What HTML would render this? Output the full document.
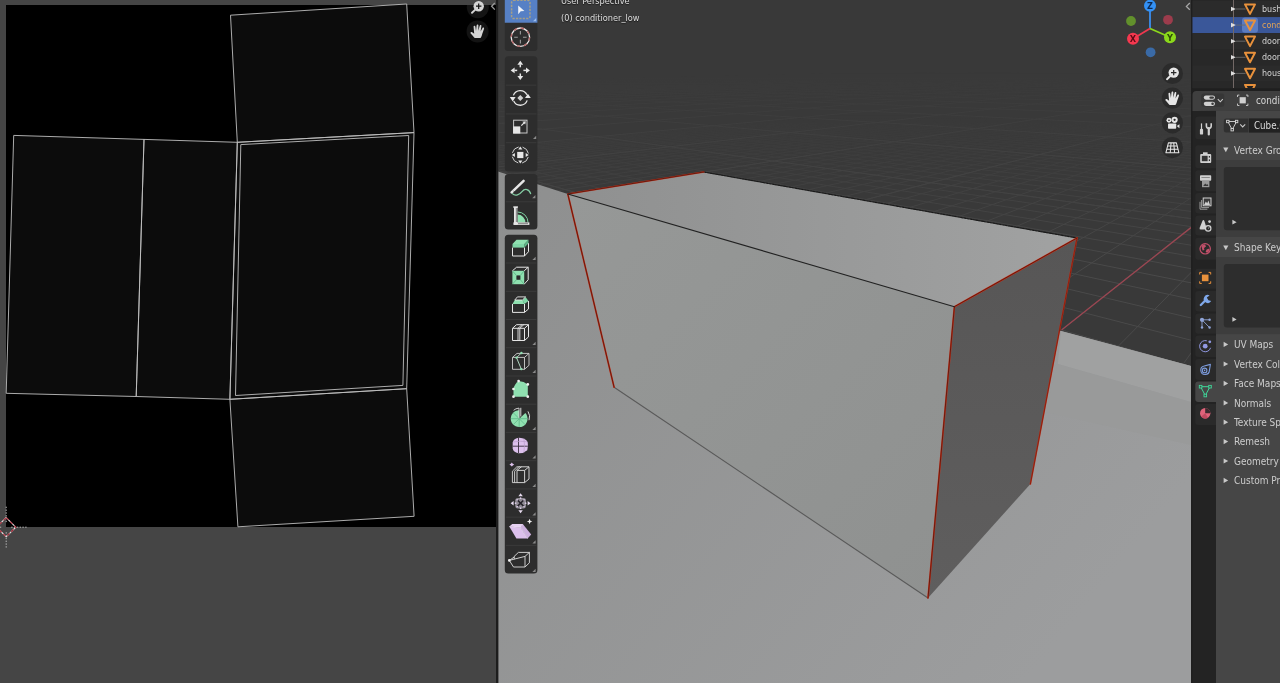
<!DOCTYPE html>
<html><head><meta charset="utf-8"><title>Blender</title>
<style>
html,body{margin:0;padding:0;background:#454545;}
body{width:1280px;height:683px;overflow:hidden;position:relative;font-family:"DejaVu Sans Condensed","DejaVu Sans","Liberation Sans",sans-serif;}
.t{position:absolute;white-space:nowrap;line-height:15px;height:15px;font-size:10px;will-change:transform;}
svg text{font-family:"DejaVu Sans","Liberation Sans",sans-serif;}
</style></head><body>
<svg width="1280" height="683" viewBox="0 0 1280 683" style="position:absolute;left:0;top:0;will-change:transform">
<rect x="0" y="0" width="496" height="683" fill="#454545"/>
<rect x="6" y="5" width="490" height="522" fill="#000"/>
<polygon points="230.5,15.2 406.7,4.0 414.0,132.6 237.3,142.3" fill="#0c0c0c" stroke="none"/>
<polygon points="13.7,135.4 144.0,139.4 136.2,396.5 6.2,393.3" fill="#0c0c0c" stroke="none"/>
<polygon points="144.0,139.4 237.3,142.3 229.9,399.3 136.2,396.5" fill="#0c0c0c" stroke="none"/>
<polygon points="237.3,142.3 414.0,132.6 406.7,388.7 229.9,399.3" fill="#0c0c0c" stroke="none"/>
<polygon points="229.9,399.3 406.7,388.7 414.1,516.3 237.9,526.8" fill="#0c0c0c" stroke="none"/>
<g fill="none" stroke="#bebebe" stroke-width="0.9" stroke-linejoin="round">
<polygon points="230.5,15.2 406.7,4.0 414.0,132.6 237.3,142.3"/>
<polygon points="13.7,135.4 144.0,139.4 136.2,396.5 6.2,393.3"/>
<polygon points="144.0,139.4 237.3,142.3 229.9,399.3 136.2,396.5"/>
<polygon points="237.3,142.3 414.0,132.6 406.7,388.7 229.9,399.3"/>
<polygon points="229.9,399.3 406.7,388.7 414.1,516.3 237.9,526.8"/>
<polygon points="240.8,144.6 408.7,135.5 402.9,385.4 235.5,395.5"/>
</g>
<clipPath id="uvclip"><rect x="0" y="0" width="496" height="683"/></clipPath>
<g clip-path="url(#uvclip)">
<clipPath id="uvblk"><rect x="6" y="5" width="490" height="522"/></clipPath><circle cx="477.8" cy="7.2" r="11" fill="#141414" clip-path="url(#uvblk)"/>
<rect x="0" y="0" width="496" height="5" fill="#454545" opacity="0"/>
<circle cx="477.6" cy="31.4" r="11" fill="#131313"/>
<path d="M475.3,9.6 L472.0,12.8" stroke="#d4d4d4" stroke-width="1.9" stroke-linecap="round"/><circle cx="478.7" cy="6.2" r="5.2" fill="#d4d4d4"/><path d="M476.0,6.2 h5.4 M478.7,3.5 v5.4" stroke="#111" stroke-width="1.2"/>
<g transform="translate(477.3 31.5)" fill="#d4d4d4" stroke="none"><path d="M-2.6,6.6 C-3.8,5 -5.4,3.2 -6.6,1.9 C-7.4,0.9 -6.2,-0.1 -5.1,0.7 L-3.1,2.2 L-3.7,-4.6 C-3.8,-5.9 -2.1,-6.1 -1.9,-4.8 L-1.3,-0.6 L-0.7,-6.1 C-0.6,-7.4 1.2,-7.3 1.1,-6 L1,-0.7 L2.4,-5.8 C2.7,-7 4.4,-6.6 4.1,-5.4 L3.3,-0.1 L5.2,-3.4 C5.8,-4.4 7.2,-3.7 6.7,-2.6 L5,2.2 C4.6,4.2 4,5.4 3.2,6.6 Z"/></g>
<path d="M494.8,3 L491.6,6.3 L494.8,9.6" fill="none" stroke="#9a9a9a" stroke-width="1.3"/>
</g>
<g fill="none" stroke-width="1">
<path d="M6.2,506.70000000000005 V522.2 M6.2,532.2 V547.7 M11.2,527.2 H26.7 M1.2000000000000002,527.2 H-1.7999999999999998" stroke="#b8b8b8" stroke-dasharray="1.4 1.4"/>
<path d="M6.2,517.6 L15.8,527.2 L6.2,536.8000000000001 L-3.3999999999999995,527.2 Z" stroke="#e4e4e4" stroke-width="1.1"/>
<path d="M6.2,517.6 L15.8,527.2 L6.2,536.8000000000001 L-3.3999999999999995,527.2 Z" stroke="#a82434" stroke-width="1.1" stroke-dasharray="3.2 2.4"/>
</g>
<defs><linearGradient id="bgv" x1="0" y1="0" x2="0" y2="1"><stop offset="0" stop-color="#393939"/><stop offset="1" stop-color="#3c3c3c"/></linearGradient>
<linearGradient id="front" x1="0" y1="0" x2="1" y2="1"><stop offset="0" stop-color="#969897"/><stop offset="1" stop-color="#8f9190"/></linearGradient>
<linearGradient id="side" x1="0" y1="0" x2="0" y2="1"><stop offset="0" stop-color="#575656"/><stop offset="1" stop-color="#5f5e5e"/></linearGradient>
<linearGradient id="topf" x1="0" y1="0" x2="1" y2="0"><stop offset="0" stop-color="#8f9090"/><stop offset="1" stop-color="#a1a2a2"/></linearGradient>
<linearGradient id="floor" x1="0" y1="0" x2="1" y2="0.6"><stop offset="0" stop-color="#8e8f8f"/><stop offset="1" stop-color="#9c9d9e"/></linearGradient>
<clipPath id="vpclip"><rect x="498.5" y="0" width="692.5" height="683"/></clipPath>
<clipPath id="darkclip"><polygon points="498,0 1191,0 1191,366 1061,331 1077,238 703.7,172 567.8,194 498,171.4"/></clipPath>
</defs>
<rect x="496" y="0" width="2.5" height="683" fill="#1d1d1d"/>
<g clip-path="url(#vpclip)">
<rect x="498" y="0" width="693" height="683" fill="#393939"/>
<defs><linearGradient id="gfade" gradientUnits="userSpaceOnUse" x1="0" y1="115" x2="0" y2="270"><stop offset="0" stop-color="#fff" stop-opacity="0"/><stop offset="1" stop-color="#fff" stop-opacity="1"/></linearGradient>
<mask id="gmask" maskUnits="userSpaceOnUse" x="499" y="0" width="692" height="400"><rect x="499" y="0" width="692" height="400" fill="url(#gfade)"/></mask>
<linearGradient id="cfade" gradientUnits="userSpaceOnUse" x1="0" y1="70" x2="0" y2="170"><stop offset="0" stop-color="#fff" stop-opacity="0"/><stop offset="1" stop-color="#fff" stop-opacity="1"/></linearGradient>
<mask id="cmask" maskUnits="userSpaceOnUse" x="499" y="0" width="692" height="400"><rect x="499" y="0" width="692" height="400" fill="url(#cfade)"/></mask></defs>
<g clip-path="url(#darkclip)">
<g mask="url(#gmask)" stroke="#4a4a4a" stroke-width="1" fill="none">
<line x1="-8152.0" y1="1514.7" x2="-1089.1" y2="295.5"/>
<line x1="-7726.1" y1="1508.8" x2="-965.0" y2="283.8"/>
<line x1="-7300.3" y1="1502.9" x2="-852.7" y2="273.2"/>
<line x1="-6874.4" y1="1497.0" x2="-750.6" y2="263.6"/>
<line x1="-6448.6" y1="1491.2" x2="-657.4" y2="254.8"/>
<line x1="-6022.7" y1="1485.3" x2="-571.9" y2="246.8"/>
<line x1="-5596.9" y1="1479.4" x2="-493.2" y2="239.4"/>
<line x1="-5171.0" y1="1473.5" x2="-420.6" y2="232.5"/>
<line x1="-4745.2" y1="1467.6" x2="-353.3" y2="226.2"/>
<line x1="-4319.3" y1="1461.7" x2="-290.8" y2="220.3"/>
<line x1="-3893.5" y1="1455.8" x2="-232.6" y2="214.8"/>
<line x1="-3467.6" y1="1449.9" x2="-178.3" y2="209.7"/>
<line x1="-3041.8" y1="1444.0" x2="-127.5" y2="204.9"/>
<line x1="-2615.9" y1="1438.1" x2="-79.9" y2="200.4"/>
<line x1="-2190.1" y1="1432.2" x2="-35.1" y2="196.2"/>
<line x1="-1764.2" y1="1426.4" x2="7.0" y2="192.2"/>
<line x1="-1338.4" y1="1420.5" x2="46.8" y2="188.5"/>
<line x1="-912.5" y1="1414.6" x2="84.3" y2="185.0"/>
<line x1="-486.7" y1="1408.7" x2="119.8" y2="181.6"/>
<line x1="-60.8" y1="1402.8" x2="153.4" y2="178.5"/>
<line x1="365.0" y1="1396.9" x2="185.3" y2="175.4"/>
<line x1="790.9" y1="1391.0" x2="215.7" y2="172.6"/>
<line x1="1216.7" y1="1385.1" x2="244.5" y2="169.9"/>
<line x1="1642.6" y1="1379.2" x2="272.0" y2="167.3"/>
<line x1="2068.4" y1="1373.3" x2="298.2" y2="164.8"/>
<line x1="2494.3" y1="1367.5" x2="323.2" y2="162.5"/>
<line x1="2920.1" y1="1361.6" x2="347.1" y2="160.2"/>
<line x1="3346.0" y1="1355.7" x2="369.9" y2="158.1"/>
<line x1="3771.8" y1="1349.8" x2="391.8" y2="156.0"/>
<line x1="4197.7" y1="1343.9" x2="412.8" y2="154.0"/>
<line x1="4623.5" y1="1338.0" x2="432.9" y2="152.1"/>
<line x1="5049.3" y1="1332.1" x2="452.2" y2="150.3"/>
<line x1="5475.2" y1="1326.2" x2="470.8" y2="148.5"/>
<line x1="5901.0" y1="1320.3" x2="488.6" y2="146.9"/>
<line x1="6326.9" y1="1314.4" x2="505.8" y2="145.2"/>
<line x1="6752.7" y1="1308.5" x2="522.4" y2="143.7"/>
<line x1="7178.6" y1="1302.7" x2="538.3" y2="142.2"/>
<line x1="7604.4" y1="1296.8" x2="553.7" y2="140.7"/>
<line x1="8030.3" y1="1290.9" x2="568.5" y2="139.3"/>
<line x1="8456.1" y1="1285.0" x2="582.8" y2="138.0"/>
<line x1="8882.0" y1="1279.1" x2="596.7" y2="136.7"/>
<line x1="9307.8" y1="1273.2" x2="610.0" y2="135.4"/>
<line x1="9733.7" y1="1267.3" x2="623.0" y2="134.2"/>
<line x1="10159.5" y1="1261.4" x2="635.5" y2="133.0"/>
<line x1="10585.4" y1="1255.5" x2="647.6" y2="131.9"/>
<line x1="11011.2" y1="1249.6" x2="659.4" y2="130.8"/>
<line x1="11437.1" y1="1243.8" x2="670.7" y2="129.7"/>
<line x1="11862.9" y1="1237.9" x2="681.8" y2="128.7"/>
<line x1="12288.8" y1="1232.0" x2="692.5" y2="127.7"/>
<line x1="12714.6" y1="1226.1" x2="702.9" y2="126.7"/>
<line x1="13140.5" y1="1220.2" x2="713.0" y2="125.7"/>
<line x1="13566.3" y1="1214.3" x2="722.8" y2="124.8"/>
<line x1="13992.2" y1="1208.4" x2="732.3" y2="123.9"/>
<line x1="14418.0" y1="1202.5" x2="741.6" y2="123.0"/>
<line x1="14843.9" y1="1196.6" x2="750.6" y2="122.2"/>
<line x1="15269.7" y1="1190.7" x2="759.4" y2="121.4"/>
<line x1="15695.6" y1="1184.8" x2="767.9" y2="120.6"/>
<line x1="16121.4" y1="1179.0" x2="776.2" y2="119.8"/>
<line x1="16547.3" y1="1173.1" x2="784.3" y2="119.0"/>
<line x1="16973.1" y1="1167.2" x2="792.2" y2="118.3"/>
<line x1="17399.0" y1="1161.3" x2="799.9" y2="117.5"/>
<line x1="17824.8" y1="1155.4" x2="807.4" y2="116.8"/>
<line x1="18250.7" y1="1149.5" x2="814.7" y2="116.1"/>
<line x1="18676.5" y1="1143.6" x2="821.8" y2="115.5"/>
<line x1="19102.3" y1="1137.7" x2="828.8" y2="114.8"/>
<line x1="19528.2" y1="1131.8" x2="835.6" y2="114.2"/>
<line x1="19954.0" y1="1125.9" x2="842.2" y2="113.6"/>
<line x1="20379.9" y1="1120.1" x2="848.7" y2="112.9"/>
<line x1="20805.7" y1="1114.2" x2="855.0" y2="112.3"/>
<line x1="21231.6" y1="1108.3" x2="861.2" y2="111.8"/>
<line x1="4131.9" y1="1344.8" x2="1579.0" y2="145.1"/>
<line x1="3763.2" y1="1349.9" x2="1551.9" y2="143.8"/>
<line x1="3394.5" y1="1355.0" x2="1525.8" y2="142.6"/>
<line x1="3025.8" y1="1360.1" x2="1500.6" y2="141.4"/>
<line x1="2657.1" y1="1365.2" x2="1476.4" y2="140.2"/>
<line x1="2288.4" y1="1370.3" x2="1453.0" y2="139.1"/>
<line x1="1919.7" y1="1375.4" x2="1430.5" y2="138.0"/>
<line x1="1551.0" y1="1380.5" x2="1408.7" y2="137.0"/>
<line x1="1182.3" y1="1385.6" x2="1387.7" y2="136.0"/>
<line x1="813.6" y1="1390.7" x2="1367.3" y2="135.0"/>
<line x1="444.9" y1="1395.8" x2="1347.7" y2="134.1"/>
<line x1="76.2" y1="1400.9" x2="1328.7" y2="133.2"/>
<line x1="-292.5" y1="1406.0" x2="1310.3" y2="132.3"/>
<line x1="-661.2" y1="1411.1" x2="1292.4" y2="131.5"/>
<line x1="-1029.9" y1="1416.2" x2="1275.1" y2="130.6"/>
<line x1="-1398.6" y1="1421.3" x2="1258.4" y2="129.8"/>
<line x1="-1767.3" y1="1426.4" x2="1242.1" y2="129.1"/>
<line x1="-2136.0" y1="1431.5" x2="1226.3" y2="128.3"/>
<line x1="-2504.7" y1="1436.6" x2="1211.0" y2="127.6"/>
<line x1="-2873.4" y1="1441.7" x2="1196.1" y2="126.9"/>
<line x1="-3242.1" y1="1446.8" x2="1181.7" y2="126.2"/>
<line x1="-3610.8" y1="1451.9" x2="1167.6" y2="125.5"/>
<line x1="-3979.5" y1="1457.0" x2="1153.9" y2="124.9"/>
<line x1="-4348.2" y1="1462.1" x2="1140.6" y2="124.2"/>
<line x1="-4716.9" y1="1467.2" x2="1127.7" y2="123.6"/>
<line x1="-5085.6" y1="1472.3" x2="1115.0" y2="123.0"/>
<line x1="-5454.3" y1="1477.4" x2="1102.8" y2="122.4"/>
<line x1="-5823.0" y1="1482.5" x2="1090.8" y2="121.9"/>
<line x1="-6191.7" y1="1487.6" x2="1079.1" y2="121.3"/>
<line x1="-6560.4" y1="1492.7" x2="1067.8" y2="120.8"/>
<line x1="-6929.1" y1="1497.8" x2="1056.7" y2="120.2"/>
<line x1="-7297.8" y1="1502.9" x2="1045.9" y2="119.7"/>
<line x1="-7666.5" y1="1508.0" x2="1035.3" y2="119.2"/>
<line x1="-8035.2" y1="1513.1" x2="1025.0" y2="118.7"/>
<line x1="-8403.9" y1="1518.2" x2="1014.9" y2="118.2"/>
<line x1="-8772.6" y1="1523.3" x2="1005.1" y2="117.8"/>
<line x1="-9141.3" y1="1528.4" x2="995.5" y2="117.3"/>
<line x1="-9510.0" y1="1533.5" x2="986.1" y2="116.9"/>
<line x1="-9878.7" y1="1538.6" x2="976.9" y2="116.4"/>
<line x1="-10247.4" y1="1543.7" x2="968.0" y2="116.0"/>
<line x1="-10616.1" y1="1548.8" x2="959.2" y2="115.6"/>
<line x1="-10984.8" y1="1553.9" x2="950.6" y2="115.2"/>
<line x1="-11353.5" y1="1559.0" x2="942.2" y2="114.8"/>
<line x1="-11722.2" y1="1564.1" x2="934.0" y2="114.4"/>
<line x1="-12090.9" y1="1569.2" x2="926.0" y2="114.0"/>
<line x1="-12459.6" y1="1574.3" x2="918.1" y2="113.6"/>
<line x1="-12828.3" y1="1579.4" x2="910.4" y2="113.3"/>
<line x1="-13197.0" y1="1584.5" x2="902.8" y2="112.9"/>
<line x1="-13565.7" y1="1589.6" x2="895.4" y2="112.5"/>
<line x1="-13934.4" y1="1594.7" x2="888.2" y2="112.2"/>
<line x1="-14303.1" y1="1599.8" x2="881.1" y2="111.9"/>
<line x1="-14671.8" y1="1604.9" x2="874.1" y2="111.5"/>
</g>
<g mask="url(#cmask)" stroke="#434343" stroke-width="1" fill="none">
<line x1="-123131.1" y1="3105.2" x2="-5686.6" y2="221.8"/>
<line x1="-118872.6" y1="3046.2" x2="-4684.9" y2="199.1"/>
<line x1="-114614.1" y1="2987.3" x2="-3931.4" y2="182.0"/>
<line x1="-110355.6" y1="2928.4" x2="-3343.9" y2="168.6"/>
<line x1="-106097.1" y1="2869.5" x2="-2873.1" y2="158.0"/>
<line x1="-101838.6" y1="2810.6" x2="-2487.2" y2="149.2"/>
<line x1="-97580.1" y1="2751.7" x2="-2165.3" y2="141.9"/>
<line x1="-93321.7" y1="2692.8" x2="-1892.6" y2="135.7"/>
<line x1="-89063.2" y1="2633.9" x2="-1658.7" y2="130.4"/>
<line x1="-84804.7" y1="2575.0" x2="-1455.8" y2="125.8"/>
<line x1="-80546.2" y1="2516.1" x2="-1278.1" y2="121.8"/>
<line x1="-76287.7" y1="2457.2" x2="-1121.3" y2="118.2"/>
<line x1="-72029.2" y1="2398.3" x2="-981.8" y2="115.0"/>
<line x1="-67770.7" y1="2339.4" x2="-856.9" y2="112.2"/>
<line x1="-63512.3" y1="2280.5" x2="-744.5" y2="109.7"/>
<line x1="-59253.8" y1="2221.6" x2="-642.8" y2="107.4"/>
<line x1="-54995.3" y1="2162.7" x2="-550.2" y2="105.3"/>
<line x1="-50736.8" y1="2103.8" x2="-465.7" y2="103.3"/>
<line x1="-46478.3" y1="2044.9" x2="-388.2" y2="101.6"/>
<line x1="-42219.8" y1="1986.0" x2="-316.9" y2="100.0"/>
<line x1="-37961.3" y1="1927.0" x2="-251.1" y2="98.5"/>
<line x1="-33702.9" y1="1868.1" x2="-190.1" y2="97.1"/>
<line x1="-29444.4" y1="1809.2" x2="-133.4" y2="95.8"/>
<line x1="-25185.9" y1="1750.3" x2="-80.7" y2="94.6"/>
<line x1="-20927.4" y1="1691.4" x2="-31.5" y2="93.5"/>
<line x1="-16668.9" y1="1632.5" x2="14.6" y2="92.4"/>
<line x1="-12410.4" y1="1573.6" x2="57.8" y2="91.5"/>
<line x1="-8152.0" y1="1514.7" x2="98.4" y2="90.5"/>
<line x1="-3893.5" y1="1455.8" x2="136.6" y2="89.7"/>
<line x1="365.0" y1="1396.9" x2="172.6" y2="88.9"/>
<line x1="4623.5" y1="1338.0" x2="206.6" y2="88.1"/>
<line x1="8882.0" y1="1279.1" x2="238.8" y2="87.3"/>
<line x1="13140.5" y1="1220.2" x2="269.3" y2="86.7"/>
<line x1="17399.0" y1="1161.3" x2="298.2" y2="86.0"/>
<line x1="21657.4" y1="1102.4" x2="325.7" y2="85.4"/>
<line x1="25915.9" y1="1043.5" x2="351.9" y2="84.8"/>
<line x1="30174.4" y1="984.6" x2="376.8" y2="84.2"/>
<line x1="34432.9" y1="925.7" x2="400.6" y2="83.7"/>
<line x1="38691.4" y1="866.8" x2="423.2" y2="83.2"/>
<line x1="42949.9" y1="807.9" x2="444.9" y2="82.7"/>
<line x1="47208.4" y1="749.0" x2="465.6" y2="82.2"/>
<line x1="51466.8" y1="690.0" x2="485.5" y2="81.8"/>
<line x1="55725.3" y1="631.1" x2="504.5" y2="81.3"/>
<line x1="59983.8" y1="572.2" x2="522.7" y2="80.9"/>
<line x1="64242.3" y1="513.3" x2="540.3" y2="80.5"/>
<line x1="68500.8" y1="454.4" x2="557.1" y2="80.1"/>
<line x1="72759.3" y1="395.5" x2="573.3" y2="79.8"/>
<line x1="77017.7" y1="336.6" x2="588.9" y2="79.4"/>
<line x1="81276.2" y1="277.7" x2="603.9" y2="79.1"/>
<line x1="85534.7" y1="218.8" x2="618.3" y2="78.7"/>
<line x1="89793.2" y1="159.9" x2="632.3" y2="78.4"/>
<line x1="94051.7" y1="101.0" x2="645.7" y2="78.1"/>
<line x1="98310.2" y1="42.1" x2="658.7" y2="77.8"/>
<line x1="102568.7" y1="-16.8" x2="671.2" y2="77.5"/>
<line x1="106827.1" y1="-75.7" x2="683.4" y2="77.3"/>
<line x1="111085.6" y1="-134.6" x2="695.1" y2="77.0"/>
<line x1="115344.1" y1="-193.5" x2="706.5" y2="76.7"/>
<line x1="119602.6" y1="-252.4" x2="717.5" y2="76.5"/>
<line x1="123861.1" y1="-311.3" x2="728.1" y2="76.2"/>
<line x1="128119.6" y1="-370.2" x2="738.4" y2="76.0"/>
<line x1="132378.1" y1="-429.2" x2="748.4" y2="75.8"/>
<line x1="136636.5" y1="-488.1" x2="758.2" y2="75.6"/>
<line x1="140895.0" y1="-547.0" x2="767.6" y2="75.4"/>
<line x1="145153.5" y1="-605.9" x2="776.7" y2="75.1"/>
<line x1="149412.0" y1="-664.8" x2="785.6" y2="74.9"/>
<line x1="153670.5" y1="-723.7" x2="794.3" y2="74.7"/>
<line x1="157929.0" y1="-782.6" x2="802.7" y2="74.6"/>
<line x1="162187.4" y1="-841.5" x2="810.9" y2="74.4"/>
<line x1="166445.9" y1="-900.4" x2="818.8" y2="74.2"/>
<line x1="170704.4" y1="-959.3" x2="826.6" y2="74.0"/>
<line x1="3394.5" y1="1355.0" x2="1414.2" y2="70.2"/>
<line x1="-292.5" y1="1406.0" x2="1388.2" y2="70.4"/>
<line x1="-3979.5" y1="1457.0" x2="1363.3" y2="70.5"/>
<line x1="-7666.5" y1="1508.0" x2="1339.4" y2="70.7"/>
<line x1="-11353.5" y1="1559.0" x2="1316.4" y2="70.8"/>
<line x1="-15040.5" y1="1610.0" x2="1294.3" y2="71.0"/>
<line x1="-18727.5" y1="1661.0" x2="1273.1" y2="71.1"/>
<line x1="-22414.5" y1="1712.0" x2="1252.6" y2="71.2"/>
<line x1="-26101.5" y1="1763.0" x2="1232.9" y2="71.3"/>
<line x1="-29788.5" y1="1814.0" x2="1213.9" y2="71.5"/>
<line x1="-33475.5" y1="1865.0" x2="1195.6" y2="71.6"/>
<line x1="-37162.5" y1="1916.0" x2="1177.9" y2="71.7"/>
<line x1="-40849.5" y1="1967.0" x2="1160.8" y2="71.8"/>
<line x1="-44536.5" y1="2018.0" x2="1144.2" y2="71.9"/>
<line x1="-48223.5" y1="2069.0" x2="1128.2" y2="72.0"/>
<line x1="-51910.5" y1="2120.0" x2="1112.8" y2="72.1"/>
<line x1="-55597.5" y1="2171.0" x2="1097.8" y2="72.2"/>
<line x1="-59284.5" y1="2222.0" x2="1083.3" y2="72.3"/>
<line x1="-62971.5" y1="2273.0" x2="1069.2" y2="72.4"/>
<line x1="-66658.5" y1="2324.0" x2="1055.6" y2="72.5"/>
<line x1="-70345.5" y1="2375.0" x2="1042.3" y2="72.5"/>
<line x1="-74032.5" y1="2426.0" x2="1029.5" y2="72.6"/>
<line x1="-77719.5" y1="2477.0" x2="1017.0" y2="72.7"/>
<line x1="-81406.5" y1="2528.0" x2="1004.9" y2="72.8"/>
<line x1="-85093.5" y1="2579.0" x2="993.2" y2="72.8"/>
<line x1="-88780.5" y1="2630.0" x2="981.7" y2="72.9"/>
<line x1="-92467.5" y1="2681.0" x2="970.6" y2="73.0"/>
<line x1="-96154.5" y1="2732.0" x2="959.8" y2="73.1"/>
<line x1="-99841.5" y1="2783.0" x2="949.2" y2="73.1"/>
<line x1="-103528.5" y1="2834.0" x2="939.0" y2="73.2"/>
<line x1="-107215.5" y1="2885.0" x2="929.0" y2="73.2"/>
<line x1="-110902.5" y1="2936.0" x2="919.3" y2="73.3"/>
<line x1="-114589.5" y1="2987.0" x2="909.8" y2="73.4"/>
<line x1="-118276.5" y1="3038.0" x2="900.5" y2="73.4"/>
<line x1="-121963.5" y1="3089.0" x2="891.5" y2="73.5"/>
<line x1="-125650.5" y1="3140.0" x2="882.7" y2="73.5"/>
<line x1="-129337.5" y1="3191.0" x2="874.1" y2="73.6"/>
<line x1="-133024.5" y1="3242.0" x2="865.7" y2="73.6"/>
<line x1="-136711.5" y1="3293.0" x2="857.5" y2="73.7"/>
<line x1="-140398.5" y1="3344.0" x2="849.5" y2="73.7"/>
<line x1="-144085.5" y1="3395.0" x2="841.7" y2="73.8"/>
</g>
<line x1="1061.5" y1="330" x2="1191" y2="227.6" stroke="#9c4652" stroke-width="1.3"/>
</g>
<polygon points="498,171.4 567.8,194 960,300 1061,331 1191,366 1191,683 498,683" fill="url(#floor)"/>
<polygon points="1061,331 1191,366 1191,402 1057.8,364" fill="#a0a1a1"/>
<polygon points="1057.8,364 1191,402 1191,445 1045,412" fill="#999a9a"/>
<polygon points="567.8,194.0 703.7,172.0 1077.0,238.0 954.4,306.7" fill="url(#topf)"/>
<polygon points="567.8,194.0 954.4,306.7 928.0,598.0 614.1,387.2" fill="url(#front)"/>
<polygon points="954.4,306.7 1077.0,238.0 1030.4,484.0 928.0,598.0" fill="url(#side)"/>
<g fill="none" stroke-linecap="round">
<polyline points="703.7,172.0 1077.0,238.0" stroke="#1a1a1a" stroke-width="1.2" stroke-dasharray="2 1"/>
<polyline points="614.1,387.2 928.0,598.0" stroke="#5a5a5a" stroke-width="1.1"/>
<polyline points="614.1,387.2 567.8,194.0 703.7,172.0" stroke="#cc3018" stroke-width="1.7" stroke-linejoin="round"/>
<polyline points="1077.0,238.0 954.4,306.7 928.0,598.0" stroke="#cc3018" stroke-width="1.7" stroke-linejoin="round"/>
<polyline points="1077.0,238.0 1030.4,484.0" stroke="#cc3018" stroke-width="1.5"/>
<polyline points="614.1,387.2 567.8,194.0 703.7,172.0" stroke="#2a0e0a" stroke-width="0.75" stroke-opacity="0.85" stroke-linejoin="round"/>
<polyline points="1077.0,238.0 954.4,306.7 928.0,598.0" stroke="#2a0e0a" stroke-width="0.75" stroke-opacity="0.85" stroke-linejoin="round"/>
<polyline points="1077.0,238.0 1030.4,484.0" stroke="#2a0e0a" stroke-width="0.6" stroke-opacity="0.7"/>
<polyline points="567.8,194.0 954.4,306.7" stroke="#222" stroke-width="1.1"/>
</g>
</g>
<rect x="504.8" y="-6" width="32.6" height="28.7" fill="#5680c5"/>
<path d="M504.8,22.9 h32.6 v25 a3,3 0 0 1 -3,3 h-26.6 a3,3 0 0 1 -3,-3 z" fill="#2d2d2d"/>
<rect x="504.8" y="56.3" width="32.6" height="115.2" rx="3.5" fill="#2d2d2d"/>
<line x1="505.8" y1="85.1" x2="536.4" y2="85.1" stroke="#3b3b3b" stroke-width="1"/>
<line x1="505.8" y1="113.9" x2="536.4" y2="113.9" stroke="#3b3b3b" stroke-width="1"/>
<line x1="505.8" y1="142.7" x2="536.4" y2="142.7" stroke="#3b3b3b" stroke-width="1"/>
<rect x="504.8" y="174" width="32.6" height="55.5" rx="3.5" fill="#2d2d2d"/>
<line x1="505.8" y1="201.8" x2="536.4" y2="201.8" stroke="#3b3b3b" stroke-width="1"/>
<rect x="504.8" y="234.8" width="32.6" height="338.8" rx="3.5" fill="#2d2d2d"/>
<line x1="505.8" y1="263.0" x2="536.4" y2="263.0" stroke="#3b3b3b" stroke-width="1"/>
<line x1="505.8" y1="291.3" x2="536.4" y2="291.3" stroke="#3b3b3b" stroke-width="1"/>
<line x1="505.8" y1="319.5" x2="536.4" y2="319.5" stroke="#3b3b3b" stroke-width="1"/>
<line x1="505.8" y1="347.7" x2="536.4" y2="347.7" stroke="#3b3b3b" stroke-width="1"/>
<line x1="505.8" y1="376.0" x2="536.4" y2="376.0" stroke="#3b3b3b" stroke-width="1"/>
<line x1="505.8" y1="404.2" x2="536.4" y2="404.2" stroke="#3b3b3b" stroke-width="1"/>
<line x1="505.8" y1="432.4" x2="536.4" y2="432.4" stroke="#3b3b3b" stroke-width="1"/>
<line x1="505.8" y1="460.7" x2="536.4" y2="460.7" stroke="#3b3b3b" stroke-width="1"/>
<line x1="505.8" y1="488.9" x2="536.4" y2="488.9" stroke="#3b3b3b" stroke-width="1"/>
<line x1="505.8" y1="517.1" x2="536.4" y2="517.1" stroke="#3b3b3b" stroke-width="1"/>
<line x1="505.8" y1="545.4" x2="536.4" y2="545.4" stroke="#3b3b3b" stroke-width="1"/>
<rect x="511.6" y="0.3" width="18.4" height="18.3" rx="2" fill="none" stroke="#c8ac6c" stroke-opacity="0.7" stroke-width="1.5" stroke-dasharray="2.2 1.2"/>
<path d="M518.2,5.6 L524.4,10.9 L520.7,11.3 L518.2,14.3 Z" fill="#eef2f8"/>
<path d="M536.2,21.2 l0,-3.2 l-3.2,3.2 z" fill="#9fc0f0"/>
<circle cx="520.4" cy="37.2" r="9.2" fill="none" stroke="#ececec" stroke-width="1.3"/>
<circle cx="520.4" cy="37.2" r="9.2" fill="none" stroke="#b86868" stroke-width="1.3" stroke-dasharray="3.6 3.62" />
<path d="M520.4,31.000000000000004 v3.6 M520.4,39.800000000000004 v3.6 M514.1999999999999,37.2 h3.6 M523.0,37.2 h3.6" stroke="#9a9a9a" stroke-width="1.1" fill="none"/>
<g transform="rotate(0 520.3 70.4)"><path d="M520.3,60.800000000000004 l2.9,3.9 h-5.8 z" fill="#e6e6e6"/><path d="M520.3,64.5 v2.8" stroke="#e6e6e6" stroke-width="1.5"/></g>
<g transform="rotate(90 520.3 70.4)"><path d="M520.3,60.800000000000004 l2.9,3.9 h-5.8 z" fill="#e6e6e6"/><path d="M520.3,64.5 v2.8" stroke="#e6e6e6" stroke-width="1.5"/></g>
<g transform="rotate(180 520.3 70.4)"><path d="M520.3,60.800000000000004 l2.9,3.9 h-5.8 z" fill="#e6e6e6"/><path d="M520.3,64.5 v2.8" stroke="#e6e6e6" stroke-width="1.5"/></g>
<g transform="rotate(270 520.3 70.4)"><path d="M520.3,60.800000000000004 l2.9,3.9 h-5.8 z" fill="#e6e6e6"/><path d="M520.3,64.5 v2.8" stroke="#e6e6e6" stroke-width="1.5"/></g>
<path d="M520.3,94.9 l3,3 l-3,3 l-3,-3 z" fill="#d0d0d0"/>
<path d="M513.4,95.4 A7.3,7.3 0 0 1 526.9,94.8" fill="none" stroke="#e6e6e6" stroke-width="1.3"/>
<path d="M527.2,100.4 A7.3,7.3 0 0 1 513.7,101.0" fill="none" stroke="#e6e6e6" stroke-width="1.3"/>
<path d="M527.9,93.7 l2.9,4.4 h-5.8 z" fill="#e6e6e6"/>
<path d="M512.6999999999999,101.5 l2.9,-4.4 h-5.8 z" fill="#e6e6e6"/>
<rect x="513.6" y="120.2" width="13.4" height="12.8" fill="none" stroke="#c8c8c8" stroke-width="1"/>
<rect x="513.1" y="126.4" width="7.2" height="7.1" fill="#e6e6e6"/>
<path d="M521.3,125.6 L524.6,122.3" stroke="#e6e6e6" stroke-width="1.2"/><path d="M525.8,121.2 l-3.4,0.6 l2.8,2.8 z" fill="#e6e6e6"/>
<path d="M536.2,139 l0,-3.2 l-3.2,3.2 z" fill="#8a8a8a"/>
<circle cx="520.3" cy="155" r="8.2" fill="none" stroke="#cfcfcf" stroke-width="1" stroke-dasharray="8.9 4" stroke-dashoffset="-2"/>
<rect x="517.1999999999999" y="151.9" width="6.2" height="6.2" fill="#e6e6e6"/>
<g transform="rotate(0 520.3 155)"><path d="M520.3,146.6 l2.1,3 h-4.2 z" fill="#e6e6e6"/></g>
<g transform="rotate(90 520.3 155)"><path d="M520.3,146.6 l2.1,3 h-4.2 z" fill="#e6e6e6"/></g>
<g transform="rotate(180 520.3 155)"><path d="M520.3,146.6 l2.1,3 h-4.2 z" fill="#e6e6e6"/></g>
<g transform="rotate(270 520.3 155)"><path d="M520.3,146.6 l2.1,3 h-4.2 z" fill="#e6e6e6"/></g>
<path d="M511.6,192.4 L523.6,180.8" stroke="#e6e6e6" stroke-width="2.5" stroke-linecap="round"/>
<path d="M513.4,190.7 l1.2,1.2" stroke="#2d2d2d" stroke-width="0.8"/>
<path d="M512.4,193.6 C515.5,196.8 519.5,194.6 522,191.6 C525,188 529.2,189.2 530.6,193.6" fill="none" stroke="#86cfa6" stroke-width="1.3" stroke-linecap="round"/>
<path d="M535.4,198.2 l0,-3.2 l-3.2,3.2 z" fill="#8a8a8a"/>
<path d="M517.6,222.4 V214.6 A7.8,7.8 0 0 1 525.4,222.4 Z" fill="#8fe0b0"/>
<path d="M517.6,212 A10.4,10.4 0 0 1 528,222.4" fill="none" stroke="#7fd0a2" stroke-width="1"/>
<rect x="514" y="206.8" width="3.4" height="18" fill="#e6e6e6"/>
<rect x="513.4" y="222.4" width="16" height="2.5" fill="#e6e6e6"/>
<rect x="513.2" y="206.4" width="4.8" height="1.3" fill="#e6e6e6"/>
<path d="M515.8,209 h1.6 M515.8,211 h1.6 M515.8,213 h1.6 M515.8,215 h1.6 M515.8,217 h1.6 M515.8,219 h1.6 M515.8,221 h1.6 M519,223 v1.2 M521,223 v1.2 M523,223 v1.2 M525,223 v1.2 M527,223 v1.2" stroke="#3a3a3a" stroke-width="1"/>
<path d="M512.5,244 l4,-4.3 h12 l-4,4.3 z" fill="#8fe0b0"/>
<path d="M512.5,244 h12 v3.6 h-12 z" fill="#7fd6a6"/>
<path d="M524.5,244 l4,-4.3 v3.6 l-4,4.3 z" fill="#5fb588"/>
<path d="M512.5,247.6 V256 H524.5 V247.6 M524.5,256 l4,-4.3 V243.3" fill="none" stroke="#e6e6e6" stroke-width="1" stroke-linejoin="round"/>
<path d="M535.6,260 l0,-3.2 l-3.2,3.2 z" fill="#8a8a8a"/>
<rect x="512.4" y="270.8" width="11.800000000000068" height="13.399999999999977" fill="#8fe0b0"/>
<rect x="516.4" y="275.4" width="4" height="4.4" fill="#2a2a2a"/>
<path d="M512.4,270.8 L516.4,275.4 M524.2,270.8 L520.4,275.4 M512.4,284.2 L516.4,279.8 M524.2,284.2 L520.4,279.8" stroke="#5fb588" stroke-width="0.9"/>
<path d="M512.4,270.8 l4.2,-3.6 h11.6 l-4,3.6 M528.2,267.2 v12.6 l-4,4.4" fill="none" stroke="#e6e6e6" stroke-width="1" stroke-linejoin="round"/>
<path d="M512.5,304 L514.8,300 H522.4 L524.5,304 Z" fill="#8fe0b0"/>
<path d="M522.4,300 L525.6,297 L528.5,301 L524.5,304 Z" fill="#7fd6a6"/>
<path d="M514.8,300 L517.4,296.9 H525.6 L522.4,300 z" fill="#2d2d2d" stroke="#e6e6e6" stroke-width="0.9" stroke-linejoin="round"/>
<path d="M512.5,304 V312.4 H524.5 V304 M524.5,312.4 L528.5,309 V301" fill="none" stroke="#e6e6e6" stroke-width="1" stroke-linejoin="round"/>
<g fill="none" stroke="#e6e6e6" stroke-width="1" stroke-linejoin="round"><rect x="512.5" y="328.3" width="12.0" height="12.199999999999989"/><path d="M512.5,328.3 l4,-3.6 h12.0 l-4,3.6 M528.5,324.7 v12.199999999999989 l-4,3.6"/></g>
<path d="M518,340.5 V328.3 l4,-3.6 M519.8,340.5 V328.3 l4,-3.6" fill="none" stroke="#e6e6e6" stroke-width="0.9"/>
<path d="M535.6,345 l0,-3.2 l-3.2,3.2 z" fill="#8a8a8a"/>
<g fill="none" stroke="#d0d0d0" stroke-width="0.9" stroke-linejoin="round"><rect x="512.5" y="357.4" width="12.0" height="11.900000000000034"/><path d="M512.5,357.4 l4.5,-4 h12.0 l-4.5,4 M529.0,353.4 v11.900000000000034 l-4.5,4"/></g>
<path d="M521.4,353 L516.5,357.6 L521.3,369.1" fill="none" stroke="#bfe8d0" stroke-width="0.9"/>
<circle cx="521.4" cy="353" r="1.2" fill="#8fe0b0"/>
<circle cx="516.5" cy="357.6" r="1.2" fill="#8fe0b0"/>
<circle cx="521.3" cy="369.1" r="1.2" fill="#8fe0b0"/>
<path d="M535.6,373 l0,-3.2 l-3.2,3.2 z" fill="#8a8a8a"/>
<path d="M518.6,381.1 Q524,381.5 527.8,384.4 L527.8,396.7 H513.5 L513.5,389 Q514.5,384 518.6,381.1 Z" fill="#8fe0b0"/>
<circle cx="518.6" cy="381.1" r="1.35" fill="#f0f0f0"/>
<circle cx="527.8" cy="384.4" r="1.35" fill="#f0f0f0"/>
<circle cx="527.8" cy="396.7" r="1.35" fill="#f0f0f0"/>
<circle cx="513.5" cy="396.7" r="1.35" fill="#f0f0f0"/>
<circle cx="513.5" cy="389" r="1.35" fill="#f0f0f0"/>
<path d="M519.2,418.7 L525.4,413.1 A8.4,8.4 0 1 1 519.2,410.3 Z" fill="#8fe0b0"/>
<line x1="519.2" y1="418.7" x2="527.6" y2="418.7" stroke="#5fb588" stroke-width="0.8"/>
<line x1="519.2" y1="418.7" x2="525.1" y2="424.6" stroke="#5fb588" stroke-width="0.8"/>
<line x1="519.2" y1="418.7" x2="519.2" y2="427.1" stroke="#5fb588" stroke-width="0.8"/>
<line x1="519.2" y1="418.7" x2="513.3" y2="424.6" stroke="#5fb588" stroke-width="0.8"/>
<line x1="519.2" y1="418.7" x2="510.8" y2="418.7" stroke="#5fb588" stroke-width="0.8"/>
<line x1="519.2" y1="418.7" x2="513.3" y2="412.8" stroke="#5fb588" stroke-width="0.8"/>
<path d="M520.8,416.5 L520.8,407.8 M528.0,411.4 A9.9,9.9 0 0 1 529.0,420.2" fill="none" stroke="#d8d8d8" stroke-width="1"/>
<path d="M519.0,418.2 V408.09999999999997 Q515.7,408.3 513.6,410.3" fill="none" stroke="#d8d8d8" stroke-width="0.9"/>
<path d="M535.6,430 l0,-3.2 l-3.2,3.2 z" fill="#8a8a8a"/>
<path d="M512.6999999999999,442.6 Q513.3,438.40000000000003 519.3,437.8 Q526.3,438.20000000000005 527.6999999999999,442.6 Q528.5,446.6 527.3,450.20000000000005 Q523.3,453.6 518.3,453.20000000000005 Q513.3,452.20000000000005 512.6999999999999,448.6 Z" fill="#dcc0ec"/>
<path d="M518.5,438.0 V453.0 M512.6999999999999,446.20000000000005 H527.9" stroke="#3a2f40" stroke-width="0.9" fill="none"/>
<path d="M513.0999999999999,442.0 Q520.3,440.6 527.3,441.8 M523.9,438.40000000000003 Q525.0999999999999,445.6 523.9,452.6" stroke="#b99ccc" stroke-width="0.7" fill="none"/>
<path d="M535.6,458.5 l0,-3.2 l-3.2,3.2 z" fill="#8a8a8a"/>
<g fill="none" stroke="#d8d8d8" stroke-width="0.95" stroke-linejoin="round"><rect x="517" y="470.4" width="7.600000000000023" height="12.200000000000045"/><path d="M517,470.4 l4.4,-3.6 h7.600000000000023 l-4.4,3.6 M529.0,466.79999999999995 v12.200000000000045 l-4.4,3.6"/></g>
<path d="M514.6,482.6 V471.2 l4.2,-4.4 h3 M512.4,482.6 V471.2 l4.4,-4.4 h3 M512.4,482.6 H517" fill="none" stroke="#d8d8d8" stroke-width="0.9" stroke-linejoin="round"/>
<path d="M511.8,462.6 l1,1.2 l1.4,0.8 l-1.4,0.8 l-1,1.2 l-1,-1.2 l-1.4,-0.8 l1.4,-0.8 z" fill="#dcc0ec"/>
<path d="M535.6,487 l0,-3.2 l-3.2,3.2 z" fill="#8a8a8a"/>
<rect x="515.2" y="498.0" width="10.8" height="10.4" rx="2.6" fill="#8e8a92"/>
<path d="M517.2,499.8 L524.0,506.59999999999997 M524.0,499.8 L517.2,506.59999999999997" stroke="#26222a" stroke-width="1.5"/>
<g transform="rotate(0 520.6 503.2)"><path d="M520.6,493.2 l2.2,3 h-4.4 z" fill="#e8dcf0"/></g>
<g transform="rotate(90 520.6 503.2)"><path d="M520.6,493.2 l2.2,3 h-4.4 z" fill="#e8dcf0"/></g>
<g transform="rotate(180 520.6 503.2)"><path d="M520.6,493.2 l2.2,3 h-4.4 z" fill="#e8dcf0"/></g>
<g transform="rotate(270 520.6 503.2)"><path d="M520.6,493.2 l2.2,3 h-4.4 z" fill="#e8dcf0"/></g>
<circle cx="517.2" cy="499.8" r="0.9" fill="#d8c8e4"/>
<circle cx="524.0" cy="499.8" r="0.9" fill="#d8c8e4"/>
<circle cx="517.2" cy="506.59999999999997" r="0.9" fill="#d8c8e4"/>
<circle cx="524.0" cy="506.59999999999997" r="0.9" fill="#d8c8e4"/>
<circle cx="520.6" cy="498.2" r="0.9" fill="#d8c8e4"/>
<circle cx="520.6" cy="508.2" r="0.9" fill="#d8c8e4"/>
<circle cx="515.6" cy="503.2" r="0.9" fill="#d8c8e4"/>
<circle cx="525.6" cy="503.2" r="0.9" fill="#d8c8e4"/>
<path d="M535.6,515.5 l0,-3.2 l-3.2,3.2 z" fill="#8a8a8a"/>
<path d="M509.3,526.6 L512.2,524 H522.8 L520.6,527.4 Z" fill="#e6d0f2"/>
<path d="M509.3,526.6 L520.6,527.4 L527.6,538.6 L516.4,538.6 Z" fill="#dcc0ec"/>
<path d="M520.6,527.4 L522.8,524 L531.2,534.6 L527.6,538.6 Z" fill="#cdb0de"/>
<path d="M509.3,526.6 L520.6,527.4 L527.6,538.6 M520.6,527.4 L522.8,524" stroke="#f4e8fa" stroke-width="0.6" fill="none"/>
<path d="M529.6,518.8 l0.8,1.9 l1.9,0.8 l-1.9,0.8 l-0.8,1.9 l-0.8,-1.9 l-1.9,-0.8 l1.9,-0.8 z" fill="#f0f0f0"/>
<path d="M535.6,543.5 l0,-3.2 l-3.2,3.2 z" fill="#8a8a8a"/>
<g fill="none" stroke="#d4d4d4" stroke-width="0.95" stroke-linejoin="round">
<path d="M509.3,560.4 L525,556.4 V567 H513.5 L509.3,560.4 M509.3,560.4 L514.6,556.8 M514,556.6 l4.4,-4.2 H529.4 l-4.4,4 M529.4,552.1999999999999 V562.8 L525,567 M514,556.6 L514.4,559.2"/>
</g>
<circle cx="509.3" cy="560.4" r="1.3" fill="#f0f0f0"/>
<path d="M535.6,572 l0,-3.2 l-3.2,3.2 z" fill="#8a8a8a"/>
<circle cx="1168" cy="19.8" r="4.9" fill="#9c3c4c"/>
<circle cx="1131" cy="21" r="4.9" fill="#62902c"/>
<circle cx="1150.6" cy="52.3" r="4.9" fill="#3a6aa6"/>
<line x1="1150" y1="28.5" x2="1150" y2="6" stroke="#3b8ff0" stroke-width="1.8"/>
<line x1="1150" y1="28.5" x2="1133" y2="38.7" stroke="#f0384f" stroke-width="1.8"/>
<line x1="1150" y1="28.5" x2="1170" y2="37.3" stroke="#8cd81c" stroke-width="1.8"/>
<circle cx="1150" cy="5.7" r="6" fill="#3391f5"/>
<circle cx="1133" cy="38.7" r="6" fill="#f6384f"/>
<circle cx="1170" cy="37.3" r="6" fill="#8bd81b"/>
<text x="1150" y="9" font-size="8.2" font-weight="bold" text-anchor="middle" fill="#0c2a55">Z</text>
<text x="1133" y="42" font-size="8.2" font-weight="bold" text-anchor="middle" fill="#5a0a14">X</text>
<text x="1170" y="40.6" font-size="8.2" font-weight="bold" text-anchor="middle" fill="#2c4a06">Y</text>
<circle cx="1172.4" cy="73.5" r="10.6" fill="#2a2a2a" fill-opacity="0.95"/>
<circle cx="1172.4" cy="98.2" r="10.6" fill="#2a2a2a" fill-opacity="0.95"/>
<circle cx="1172.4" cy="122.8" r="10.6" fill="#2a2a2a" fill-opacity="0.95"/>
<circle cx="1172.4" cy="147.6" r="10.6" fill="#2a2a2a" fill-opacity="0.95"/>
<path d="M1170.3,76.0 L1167.0,79.19999999999999" stroke="#e6e6e6" stroke-width="1.9" stroke-linecap="round"/><circle cx="1173.7" cy="72.6" r="5.2" fill="#e6e6e6"/><path d="M1171.0,72.6 h5.4 M1173.7,69.89999999999999 v5.4" stroke="#2a2a2a" stroke-width="1.2"/>
<g transform="translate(1172.2 98.5)" fill="#e6e6e6" stroke="none"><path d="M-2.6,6.6 C-3.8,5 -5.4,3.2 -6.6,1.9 C-7.4,0.9 -6.2,-0.1 -5.1,0.7 L-3.1,2.2 L-3.7,-4.6 C-3.8,-5.9 -2.1,-6.1 -1.9,-4.8 L-1.3,-0.6 L-0.7,-6.1 C-0.6,-7.4 1.2,-7.3 1.1,-6 L1,-0.7 L2.4,-5.8 C2.7,-7 4.4,-6.6 4.1,-5.4 L3.3,-0.1 L5.2,-3.4 C5.8,-4.4 7.2,-3.7 6.7,-2.6 L5,2.2 C4.6,4.2 4,5.4 3.2,6.6 Z"/></g>
<g transform="translate(1172.4 123.2) scale(0.95) translate(-1172.4 -123.2)"><g transform="translate(1172.4 123.2)" fill="#e6e6e6"><circle cx="-3.6" cy="-3.1" r="2.6"/><circle cx="2.3" cy="-3.6" r="3.3"/><circle cx="-3.6" cy="-3.1" r="0.9" fill="#2a2a2a"/><circle cx="2.3" cy="-3.6" r="1.2" fill="#2a2a2a"/><rect x="-4.6" y="0.2" width="8.6" height="5.6" rx="0.8"/><path d="M4.6,3 L7.4,1 V5.2 Z"/></g></g>
<g transform="translate(1172.4 147.8) scale(0.95) translate(-1172.4 -147.8)"><g transform="translate(1172.4 147.8)" fill="none" stroke="#e6e6e6" stroke-width="1.1" stroke-linejoin="round"><path d="M-4.2,-5.2 H4.2 L6.8,5.2 H-6.8 Z"/><path d="M-5,-1.8 H5 M-5.9,1.6 H5.9 M-1.4,-5.2 L-2.3,5.2 M1.4,-5.2 L2.3,5.2"/></g></g>
<path d="M1189.8,3 L1186.4,6.4 L1189.8,9.8" fill="none" stroke="#a8a8a8" stroke-width="1.3"/>
<rect x="1191" y="0" width="89" height="683" fill="#1f1f1f"/>
<rect x="1192.5" y="0" width="88" height="88.2" fill="#282828"/>
<rect x="1192.5" y="0.95" width="88" height="16.10" fill="#2b2b2b"/>
<rect x="1192.5" y="17.05" width="88" height="16.10" fill="#3a5799"/>
<rect x="1192.5" y="33.15" width="88" height="16.10" fill="#2b2b2b"/>
<rect x="1192.5" y="49.25" width="88" height="16.10" fill="#282828"/>
<rect x="1192.5" y="65.35" width="88" height="16.10" fill="#2b2b2b"/>
<rect x="1192.5" y="81.45" width="88" height="6.75" fill="#282828"/>
<path d="M1192.5,111 v-16 a4,4 0 0 1 4,-4 h84 v19.5 z" fill="#3f3f3f"/>
<rect x="1201.3" y="93.5" width="23" height="13.3" rx="2.5" fill="#363636"/>
<rect x="1192.5" y="111" width="24" height="572" fill="#232323"/>
<rect x="1216" y="110.5" width="64" height="573" fill="#464646"/>
<rect x="1216" y="160" width="64" height="77" fill="#3d3d3d"/>
<rect x="1216" y="257" width="64" height="77.2" fill="#3d3d3d"/>
<line x1="1233.5" y1="0" x2="1233.5" y2="88" stroke="#726866" stroke-width="1"/>
<path d="M1236,9.0 H1245.5" stroke="#6c6c6c" stroke-width="0.9"/>
<path d="M1231,6.7 L1235.8,9.0 L1231,11.3 Z" fill="#dedede"/>
<clipPath id="oc0"><rect x="1193" y="0" width="87" height="88"/></clipPath>
<path d="M1245,4.4 H1255 L1250,13.9 Z" fill="#1c1c1c" fill-opacity="0.6" stroke="#e8913c" stroke-width="2" stroke-linejoin="round" clip-path="url(#oc0)"/>
<rect x="1242" y="17.5" width="16" height="15.2" rx="3" fill="#5b7cc0"/>
<path d="M1236,25.1 H1245.5" stroke="#6c6c6c" stroke-width="0.9"/>
<path d="M1231,22.8 L1235.8,25.1 L1231,27.400000000000002 Z" fill="#dedede"/>
<clipPath id="oc1"><rect x="1193" y="0" width="87" height="88"/></clipPath>
<path d="M1245,20.5 H1255 L1250,30.0 Z" fill="#1c1c1c" fill-opacity="0" stroke="#e8913c" stroke-width="2" stroke-linejoin="round" clip-path="url(#oc1)"/>
<path d="M1236,41.2 H1245.5" stroke="#6c6c6c" stroke-width="0.9"/>
<path d="M1231,38.900000000000006 L1235.8,41.2 L1231,43.5 Z" fill="#dedede"/>
<clipPath id="oc2"><rect x="1193" y="0" width="87" height="88"/></clipPath>
<path d="M1245,36.6 H1255 L1250,46.1 Z" fill="#1c1c1c" fill-opacity="0.6" stroke="#e8913c" stroke-width="2" stroke-linejoin="round" clip-path="url(#oc2)"/>
<path d="M1236,57.300000000000004 H1245.5" stroke="#6c6c6c" stroke-width="0.9"/>
<path d="M1231,55.00000000000001 L1235.8,57.300000000000004 L1231,59.6 Z" fill="#dedede"/>
<clipPath id="oc3"><rect x="1193" y="0" width="87" height="88"/></clipPath>
<path d="M1245,52.7 H1255 L1250,62.2 Z" fill="#1c1c1c" fill-opacity="0.6" stroke="#e8913c" stroke-width="2" stroke-linejoin="round" clip-path="url(#oc3)"/>
<path d="M1236,73.4 H1245.5" stroke="#6c6c6c" stroke-width="0.9"/>
<path d="M1231,71.10000000000001 L1235.8,73.4 L1231,75.7 Z" fill="#dedede"/>
<clipPath id="oc4"><rect x="1193" y="0" width="87" height="88"/></clipPath>
<path d="M1245,68.80000000000001 H1255 L1250,78.30000000000001 Z" fill="#1c1c1c" fill-opacity="0.6" stroke="#e8913c" stroke-width="2" stroke-linejoin="round" clip-path="url(#oc4)"/>
<clipPath id="oc5"><rect x="1193" y="0" width="87" height="88"/></clipPath>
<path d="M1245,84.9 H1255 L1250,94.4 Z" fill="#1c1c1c" fill-opacity="0.6" stroke="#e8913c" stroke-width="2" stroke-linejoin="round" clip-path="url(#oc5)"/>
<rect x="1203.8" y="95.5" width="11.2" height="4.2" rx="2.1" fill="#d0d0d0"/>
<rect x="1203.8" y="101.7" width="11.2" height="4.2" rx="2.1" fill="#d0d0d0"/>
<rect x="1209.4" y="96.4" width="4.6" height="2.4" rx="1.2" fill="#3a3a3a"/>
<circle cx="1212.6" cy="103.8" r="1.3" fill="#3a3a3a"/>
<path d="M1217.8,99.2 L1220.3,101.8 L1222.8,99.2" fill="none" stroke="#c8c8c8" stroke-width="1.1"/>
<rect x="1239.6000000000001" y="97.2" width="6.2" height="6.2" fill="#d0d0d0"/><path d="M1237.5,97.0 V95.1 H1239.4 M1237.5,103.6 V105.5 H1239.4 M1247.9,97.0 V95.1 H1246.0 M1247.9,103.6 V105.5 H1246.0 " fill="none" stroke="#d0d0d0" stroke-width="0.9"/>
<path d="M1216,116.4 H1198.3 a3,3 0 0 0 -3,3 V136.3 a3,3 0 0 0 3,3 H1216 Z" fill="#2a2a2a"/>
<path d="M1216,145.2 H1198.3 a3,3 0 0 0 -3,3 V165.2 a3,3 0 0 0 3,3 H1216 Z" fill="#2a2a2a"/>
<path d="M1216,170.2 H1198.3 a3,3 0 0 0 -3,3 V188.2 a3,3 0 0 0 3,3 H1216 Z" fill="#2a2a2a"/>
<path d="M1216,193 H1198.3 a3,3 0 0 0 -3,3 V210.6 a3,3 0 0 0 3,3 H1216 Z" fill="#2a2a2a"/>
<path d="M1216,215.5 H1198.3 a3,3 0 0 0 -3,3 V232.6 a3,3 0 0 0 3,3 H1216 Z" fill="#2a2a2a"/>
<path d="M1216,237.8 H1198.3 a3,3 0 0 0 -3,3 V256.8 a3,3 0 0 0 3,3 H1216 Z" fill="#2a2a2a"/>
<path d="M1216,268.8 H1198.3 a3,3 0 0 0 -3,3 V285.8 a3,3 0 0 0 3,3 H1216 Z" fill="#2a2a2a"/>
<path d="M1216,291 H1198.3 a3,3 0 0 0 -3,3 V308.5 a3,3 0 0 0 3,3 H1216 Z" fill="#2a2a2a"/>
<path d="M1216,313.5 H1198.3 a3,3 0 0 0 -3,3 V330.8 a3,3 0 0 0 3,3 H1216 Z" fill="#2a2a2a"/>
<path d="M1216,335.6 H1198.3 a3,3 0 0 0 -3,3 V354 a3,3 0 0 0 3,3 H1216 Z" fill="#2a2a2a"/>
<path d="M1216,359 H1198.3 a3,3 0 0 0 -3,3 V377 a3,3 0 0 0 3,3 H1216 Z" fill="#2a2a2a"/>
<path d="M1216,381.6 H1198.3 a3,3 0 0 0 -3,3 V399.1 a3,3 0 0 0 3,3 H1216 Z" fill="#464646"/>
<path d="M1216,404 H1198.3 a3,3 0 0 0 -3,3 V422 a3,3 0 0 0 3,3 H1216 Z" fill="#2a2a2a"/>
<path d="M1201.5,123.4 V129" stroke="#d0d0d0" stroke-width="1.2"/><rect x="1199.9" y="128.8" width="3.2" height="5.8" rx="1.2" fill="#d0d0d0"/>
<path d="M1206.4,123.2 V126 Q1206.4,128.2 1208.8,128.4 Q1211.2,128.2 1211.2,126 V123.2" fill="none" stroke="#d0d0d0" stroke-width="1.6"/><path d="M1208.8,128 V134.4" stroke="#d0d0d0" stroke-width="2.2" stroke-linecap="round"/>
<rect x="1200.2" y="154" width="11" height="9" rx="1" fill="#d0d0d0"/><rect x="1203" y="152.3" width="4.6" height="2.2" fill="#d0d0d0"/>
<rect x="1201.8" y="155.8" width="5.8" height="5.4" fill="#333"/><rect x="1208.8" y="156" width="1.2" height="1.6" fill="#333"/><rect x="1208.8" y="159.4" width="1.2" height="1.6" fill="#333"/>
<rect x="1200" y="175.2" width="11.2" height="5.6" rx="0.8" fill="#d0d0d0"/><rect x="1201.4" y="177" width="8.4" height="1" fill="#8a8a8a"/>
<rect x="1202" y="180.8" width="7.4" height="6.4" fill="#9a9a9a"/><path d="M1203.2,186 l2,-2.6 l1.4,1.4 l0.8,-0.8 l1,2 z" fill="#3a3a3a"/>
<rect x="1203.2" y="198" width="7.8" height="7.8" fill="#3a3a3a" stroke="#d0d0d0" stroke-width="1"/>
<path d="M1204,205 l1.8,-3.6 l1.4,1.8 l1.2,-2.6 l1.6,4.4 z" fill="#d0d0d0"/>
<path d="M1201.6,200 V207.6 H1209 M1200,201.8 V209.2 H1207.4" fill="none" stroke="#a8a8a8" stroke-width="0.9"/>
<path d="M1203.4,220 Q1204,220 1204.4,221 L1206.6,228 Q1206.8,229.6 1205,229.6 H1200.8 Q1199.2,229.6 1199.6,228 L1202.4,221 Q1202.8,220 1203.4,220 Z" fill="#d0d0d0"/>
<circle cx="1209.6" cy="221.6" r="1.4" fill="#d0d0d0"/>
<circle cx="1208.2" cy="228.4" r="2.7" fill="#2a2a2a" stroke="#d0d0d0" stroke-width="1.2"/><path d="M1208.2,228.4 L1209.6,227" stroke="#d0d0d0" stroke-width="0.9"/>
<circle cx="1205.2" cy="248.8" r="5.2" fill="none" stroke="#c2506a" stroke-width="1.2"/>
<path d="M1201.4,246 Q1203,244.4 1205,244.6 L1206,246.6 L1204,248 L1204.4,250 L1202.6,250.6 Z M1206.6,249.4 L1209.4,248.4 L1209.4,251 L1207.2,252.8 L1205.6,252 Z" fill="#c2506a"/>
<rect x="1201.9" y="274.59999999999997" width="6.6" height="6.6" fill="#e8913c"/><path d="M1199.7,274.5 V272.4 H1201.8 M1199.7,281.29999999999995 V283.4 H1201.8 M1210.7,274.5 V272.4 H1208.6000000000001 M1210.7,281.29999999999995 V283.4 H1208.6000000000001 " fill="none" stroke="#e8913c" stroke-width="1.0"/>
<path d="M1200.8,305 L1206,299.8" stroke="#7fa8ea" stroke-width="2.3" stroke-linecap="round"/>
<path d="M1209.6,295.4 A4,4 0 1 0 1211.2,301 L1208.4,300.2 L1206.8,297.6 Z" fill="#7fa8ea"/>
<path d="M1202,319.8 H1209.4 M1202,319.8 V327.4 M1202,319.8 L1209.4,327.4" stroke="#8fa4d8" stroke-width="0.9" fill="none"/>
<circle cx="1202" cy="319.8" r="2.1" fill="#8fa4d8"/><circle cx="1209.6" cy="319.8" r="1.2" fill="#8fa4d8"/><circle cx="1209.6" cy="327.5" r="1.2" fill="#8fa4d8"/><circle cx="1202" cy="327.5" r="1.2" fill="#8fa4d8"/>
<circle cx="1205.2" cy="346.2" r="2.4" fill="#9098e2"/><circle cx="1209.8" cy="341.8" r="1.4" fill="#9098e2"/>
<path d="M1206.8,340.8 A5.6,5.6 0 1 0 1210.6,347.8" fill="none" stroke="#9098e2" stroke-width="1"/>
<path d="M1210.4,364.4 L1209.4,370.4 A4.3,4.3 0 1 1 1204.2,366 Z" fill="none" stroke="#7c9bdc" stroke-width="1.1" stroke-linejoin="round"/>
<circle cx="1204.6" cy="370.4" r="2.3" fill="none" stroke="#7c9bdc" stroke-width="1.1"/><circle cx="1204.6" cy="370.4" r="0.8" fill="#7c9bdc"/>
<path d="M1200.6,386.70000000000005 L1210.0,386.70000000000005 L1205.3,395.5 Z" fill="none" stroke="#3fd89a" stroke-width="1.0"/><rect x="1199.3" y="385.40000000000003" width="2.6" height="2.6" fill="#464646" stroke="#3fd89a" stroke-width="0.9"/><rect x="1208.7" y="385.40000000000003" width="2.6" height="2.6" fill="#464646" stroke="#3fd89a" stroke-width="0.9"/><rect x="1204.0" y="394.2" width="2.6" height="2.6" fill="#464646" stroke="#3fd89a" stroke-width="0.9"/>
<circle cx="1205.2" cy="413.3" r="5.2" fill="#e0637a"/>
<path d="M1205.2,413.3 V408.1 A5.2,5.2 0 0 1 1210.4,413.3 Z" fill="#3a2a2e"/><path d="M1205.2,413.3 L1201.2,416.6 A5.2,5.2 0 0 0 1208,417.7 Z" fill="#c04a60"/>
<path d="M1226.3,118.4 H1248.3 V132.6 H1226.3 a2.5,2.5 0 0 1 -2.5,-2.5 V120.9 a2.5,2.5 0 0 1 2.5,-2.5 Z" fill="#303030"/>
<rect x="1248.9" y="118.4" width="32" height="14.2" fill="#222222"/>
<path d="M1227.8,121.5 L1236.6000000000001,121.5 L1232.2,129.7 Z" fill="none" stroke="#d8d8d8" stroke-width="0.9"/><rect x="1226.6" y="120.3" width="2.4" height="2.4" fill="#303030" stroke="#d8d8d8" stroke-width="0.9"/><rect x="1235.4" y="120.3" width="2.4" height="2.4" fill="#303030" stroke="#d8d8d8" stroke-width="0.9"/><rect x="1231.0" y="128.5" width="2.4" height="2.4" fill="#303030" stroke="#d8d8d8" stroke-width="0.9"/>
<path d="M1240.2,124.4 L1242.7,127 L1245.2,124.4" fill="none" stroke="#c8c8c8" stroke-width="1.1"/>
<path d="M1226.8,167 H1281 V230.2 H1226.8 a3,3 0 0 1 -3,-3 V170 a3,3 0 0 1 3,-3 Z" fill="#2d2d2d"/>
<path d="M1226.8,264 H1281 V327.4 H1226.8 a3,3 0 0 1 -3,-3 V267 a3,3 0 0 1 3,-3 Z" fill="#2d2d2d"/>
<path d="M1232.4,219.8 L1236.6,222.2 L1232.4,224.6 Z" fill="#c8c8c8"/>
<path d="M1232.4,317 L1236.6,319.4 L1232.4,321.8 Z" fill="#c8c8c8"/>
<path d="M1223.2,147.6 H1228.4 L1225.8,152.2 Z" fill="#c8c8c8"/>
<path d="M1223.2,245.6 H1228.4 L1225.8,250.2 Z" fill="#c8c8c8"/>
<path d="M1223.6,341.79999999999995 L1228.2,344.4 L1223.6,347.0 Z" fill="#c8c8c8"/>
<path d="M1223.6,361.4 L1228.2,364 L1223.6,366.6 Z" fill="#c8c8c8"/>
<path d="M1223.6,380.79999999999995 L1228.2,383.4 L1223.6,386.0 Z" fill="#c8c8c8"/>
<path d="M1223.6,400.29999999999995 L1228.2,402.9 L1223.6,405.5 Z" fill="#c8c8c8"/>
<path d="M1223.6,419.59999999999997 L1228.2,422.2 L1223.6,424.8 Z" fill="#c8c8c8"/>
<path d="M1223.6,439.0 L1228.2,441.6 L1223.6,444.20000000000005 Z" fill="#c8c8c8"/>
<path d="M1223.6,458.4 L1228.2,461 L1223.6,463.6 Z" fill="#c8c8c8"/>
<path d="M1223.6,477.79999999999995 L1228.2,480.4 L1223.6,483.0 Z" fill="#c8c8c8"/>
</svg>
<div class="t" style="left:560.5px;top:-5.6px;color:#dedede;font-size:9.1px;text-shadow:0 1px 1px rgba(0,0,0,.6)">User Perspective</div>
<div class="t" style="left:560.5px;top:11.2px;color:#dedede;font-size:9.1px;text-shadow:0 1px 1px rgba(0,0,0,.6)">(0) conditioner_low</div>
<div class="t" style="left:1261.6px;top:1.7000000000000002px;color:#d2d2d2;font-size:8.9px;">bush</div>
<div class="t" style="left:1261.6px;top:17.8px;color:#e2a355;font-size:8.9px;">conditioner_low</div>
<div class="t" style="left:1261.6px;top:33.900000000000006px;color:#d2d2d2;font-size:8.9px;">door_</div>
<div class="t" style="left:1261.6px;top:50.00000000000001px;color:#d2d2d2;font-size:8.9px;">door</div>
<div class="t" style="left:1261.6px;top:66.10000000000001px;color:#d2d2d2;font-size:8.9px;">house</div>
<div class="t" style="left:1256px;top:92.89999999999999px;color:#d6d6d6;font-size:9.8px;">conditioner_low</div>
<div class="t" style="left:1254.4px;top:118.1px;color:#dcdcdc;font-size:9.7px;">Cube.0</div>
<div class="t" style="left:1234px;top:142.6px;color:#cccccc;font-size:10px;">Vertex Groups</div>
<div class="t" style="left:1234px;top:240.4px;color:#cccccc;font-size:10px;">Shape Keys</div>
<div class="t" style="left:1234px;top:337.0px;color:#cccccc;font-size:10px;">UV Maps</div>
<div class="t" style="left:1234px;top:356.6px;color:#cccccc;font-size:10px;">Vertex Colors</div>
<div class="t" style="left:1234px;top:376.0px;color:#cccccc;font-size:10px;">Face Maps</div>
<div class="t" style="left:1234px;top:395.5px;color:#cccccc;font-size:10px;">Normals</div>
<div class="t" style="left:1234px;top:414.8px;color:#cccccc;font-size:10px;">Texture Space</div>
<div class="t" style="left:1234px;top:434.20000000000005px;color:#cccccc;font-size:10px;">Remesh</div>
<div class="t" style="left:1234px;top:453.6px;color:#cccccc;font-size:10px;">Geometry</div>
<div class="t" style="left:1234px;top:473.0px;color:#cccccc;font-size:10px;">Custom Properties</div>
</body></html>
